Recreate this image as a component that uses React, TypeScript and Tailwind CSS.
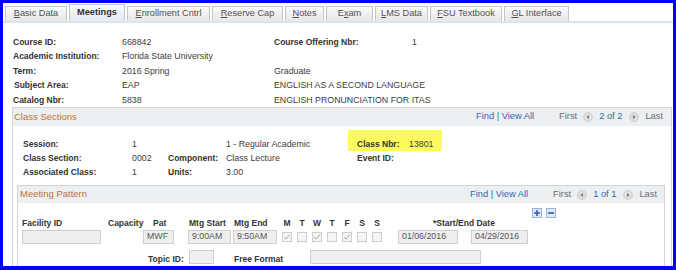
import React from "react";

const font = { fontFamily: '"Liberation Sans", Arial, sans-serif' };

const tabs = [
  { pre: "", u: "B", post: "asic Data", w: "w-[62px]" },
  { pre: "", u: "", post: "Meetings", w: "w-[56px]", active: true },
  { pre: "", u: "E", post: "nrollment Cntrl", w: "w-[83px]" },
  { pre: "", u: "R", post: "eserve Cap", w: "w-[71px]" },
  { pre: "", u: "N", post: "otes", w: "w-[39px]" },
  { pre: "E", u: "x", post: "am", w: "w-[47px]" },
  { pre: "", u: "L", post: "MS Data", w: "w-[53px]" },
  { pre: "", u: "F", post: "SU Textbook", w: "w-[72px]" },
  { pre: "", u: "G", post: "L Interface", w: "w-[65px]" },
];

const Label = ({ children }: { children?: React.ReactNode }) => (
  <div className="whitespace-nowrap text-[8.5px] font-bold text-[#333]">{children}</div>
);

const Value = ({ children }: { children?: React.ReactNode }) => (
  <div className="whitespace-nowrap text-[8.8px] text-[#3c3c3c]">{children}</div>
);

const NavArrow = ({ dir }: { dir: "l" | "r" }) => (
  <svg width="10" height="10" viewBox="0 0 10 10">
    <circle cx="5" cy="5" r="4.4" fill="#dedede" stroke="#c6c6c6" strokeWidth="0.8" />
    <path d={dir === "l" ? "M6 2.9 L3.5 5 L6 7.1Z" : "M4 2.9 L6.5 5 L4 7.1Z"} fill="#7b7b7b" />
  </svg>
);

const Nav = ({ pos }: { pos: string }) => (
  <div className="flex items-center text-[9.3px]">
    <span className="text-[#3764b4]">Find | View All</span>
    <span className="ml-[25px] text-[#6b6b6b]">First</span>
    <span className="ml-[6px] flex">
      <NavArrow dir="l" />
    </span>
    <span className="ml-[6px] text-[#3764b4]">{pos}</span>
    <span className="ml-[7px] flex">
      <NavArrow dir="r" />
    </span>
    <span className="ml-[6px] text-[#6b6b6b]">Last</span>
  </div>
);

const Chk = ({ on }: { on?: boolean }) => (
  <div className="flex w-[15px] justify-center">
    <div className="flex h-[10px] w-[10px] items-center justify-center border border-[#cdcdcd] bg-[#f5f5f5]">
      {on && (
        <svg width="8" height="8" viewBox="0 0 8 8">
          <path d="M1.2 4.1 L3.1 6.1 L6.8 1.5" fill="none" stroke="#a9a9a9" strokeWidth="1" />
        </svg>
      )}
    </div>
  </div>
);

const input = "flex h-[14px] items-center border border-[#cfcfcf] bg-[#efefef] pl-[3px] text-[8.8px] text-[#555]";

export default function App() {
  return (
    <div
      style={font}
      className="h-[270px] w-[676px] overflow-hidden border-x-[3px] border-t-[3px] border-b-[4px] border-[#0000ff] bg-white"
    >
      {/* tab strip */}
      <div className="flex h-[20px] items-end gap-[2px] border-b-2 border-[#d9e5f0] pl-[2px]">
        {tabs.map((t) => (
          <div
            key={t.post}
            className={
              t.active
                ? `${t.w} flex h-[17px] items-center justify-center border border-b-0 border-[#c3c8cf] bg-gradient-to-b from-[#f7f9fc] to-[#e4ebf3] text-[9.2px] font-bold text-[#333]`
                : `${t.w} flex h-[15px] items-center justify-center border border-b-0 border-[#c6c6c6] bg-gradient-to-b from-[#fafafa] to-[#e7e7e7] text-[9.2px] text-[#505050]`
            }
          >
            {t.pre}
            {t.u && <span className="underline underline-offset-1">{t.u}</span>}
            {t.post}
          </div>
        ))}
      </div>

      {/* course header */}
      <div className="grid grid-cols-[109px_152px_138px_1fr] pl-[10px] pt-[12px] leading-[14.4px]">
        <Label>Course ID:</Label>
        <Value>668842</Value>
        <Label>Course Offering Nbr:</Label>
        <Value>1</Value>

        <Label>Academic Institution:</Label>
        <Value>Florida State University</Value>
        <div />
        <div />

        <Label>Term:</Label>
        <Value>2016 Spring</Value>
        <Value>Graduate</Value>
        <div />

        <div className="pl-[1px]">
          <Label>Subject Area:</Label>
        </div>
        <Value>EAP</Value>
        <div className="col-span-2">
          <Value>ENGLISH AS A SECOND LANGUAGE</Value>
        </div>

        <Label>Catalog Nbr:</Label>
        <Value>5838</Value>
        <div className="col-span-2">
          <Value>ENGLISH PRONUNCIATION FOR ITAS</Value>
        </div>
      </div>

      {/* class sections */}
      <div className="ml-[9px] w-[660px] border border-[#d4d4d4]">
        <div className="flex h-[18px] items-center justify-between bg-[#ecf0f3] pl-[1px] pr-[8px]">
          <span className="text-[9.5px] text-[#c4702f]">Class Sections</span>
          <Nav pos="2 of 2" />
        </div>

        <div className="grid grid-cols-[109px_36px_58px_122px_94px] pl-[10px] pt-[11px] leading-[14px]">
          <Label>Session:</Label>
          <Value>1</Value>
          <div />
          <Value>1 - Regular Academic</Value>
          <div className="-mt-[7px] flex h-[21px] bg-[#fbfb5e] pl-[9px] pt-[7px]">
            <div className="w-[52px]">
              <Label>Class Nbr:</Label>
            </div>
            <Value>13801</Value>
          </div>

          <Label>Class Section:</Label>
          <Value>0002</Value>
          <Label>Component:</Label>
          <Value>Class Lecture</Value>
          <div className="pl-[9px]">
            <Label>Event ID:</Label>
          </div>

          <Label>Associated Class:</Label>
          <Value>1</Value>
          <Label>Units:</Label>
          <Value>3.00</Value>
          <div />
        </div>

        {/* meeting pattern */}
        <div className="ml-[4px] mt-[6px] w-[648px] border border-[#d4d4d4] pb-[20px]">
          <div className="flex h-[17px] items-center justify-between bg-[#ecf0f3] pl-[2px] pr-[7px]">
            <span className="text-[9.5px] text-[#c4702f]">Meeting Pattern</span>
            <Nav pos="1 of 1" />
          </div>

          <div className="mt-[5px] flex h-[10px] gap-[4px] pl-[514px]">
            <div className="flex h-[10px] w-[10px] items-center justify-center border border-[#9db3d1] bg-[#dfe8f4]">
              <svg width="8" height="8" viewBox="0 0 8 8">
                <path d="M4 1 V7 M1 4 H7" stroke="#2c5fb4" strokeWidth="1.6" />
              </svg>
            </div>
            <div className="flex h-[10px] w-[10px] items-center justify-center border border-[#9db3d1] bg-[#dfe8f4]">
              <svg width="8" height="8" viewBox="0 0 8 8">
                <path d="M1 4 H7" stroke="#2c5fb4" strokeWidth="1.6" />
              </svg>
            </div>
          </div>

          <div className="flex h-[11px] items-center pl-[4px] leading-[11px]">
            <div className="w-[86px]">
              <Label>Facility ID</Label>
            </div>
            <div className="w-[45px]">
              <Label>Capacity</Label>
            </div>
            <div className="w-[36px]">
              <Label>Pat</Label>
            </div>
            <div className="w-[45px]">
              <Label>Mtg Start</Label>
            </div>
            <div className="w-[45.5px]">
              <Label>Mtg End</Label>
            </div>
            {["M", "T", "W", "T", "F", "S", "S"].map((d, i) => (
              <div key={i} className="flex w-[15px] justify-center">
                <Label>{d}</Label>
              </div>
            ))}
            <div className="ml-[48.5px]">
              <Label>*Start/End Date</Label>
            </div>
          </div>

          <div className="mt-[1px] flex items-center pl-[4px]">
            <div className={`${input} w-[79px]`} />
            <div className={`${input} ml-[42px] w-[31px]`}>MWF</div>
            <div className={`${input} ml-[14px] w-[43px]`}>9:00AM</div>
            <div className={`${input} ml-[2px] w-[44px]`}>9:50AM</div>
            <div className="ml-[2.5px] flex">
              <Chk on />
              <Chk />
              <Chk on />
              <Chk />
              <Chk on />
              <Chk />
              <Chk />
            </div>
            <div className={`${input} ml-[13.5px] w-[60px]`}>01/06/2016</div>
            <div className={`${input} ml-[13px] w-[57px]`}>04/29/2016</div>
          </div>

          <div className="mt-[6px] flex h-[14px] pl-[130px]">
            <div className="w-[41px] pt-[3px]">
              <Label>Topic ID:</Label>
            </div>
            <div className={`${input} w-[25px]`} />
            <div className="ml-[20px] w-[76px] pt-[3px]">
              <Label>Free Format</Label>
            </div>
            <div className={`${input} w-[171px]`} />
          </div>
        </div>
      </div>
    </div>
  );
}
